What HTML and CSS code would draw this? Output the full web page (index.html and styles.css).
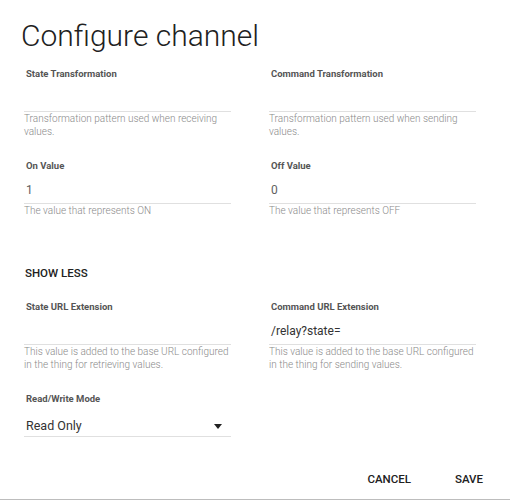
FILE: index.html
```html
<!DOCTYPE html>
<html>
<head>
<meta charset="utf-8">
<link rel="stylesheet" href="styles.css">
</head>
<body>
<div class="dialog">
  <h1 class="title">Configure channel</h1>
  <div class="grid">
    <div class="field">
      <div class="label">State Transformation</div>
      <div class="input"></div>
      <div class="helper">Transformation pattern used when receiving values.</div>
    </div>
    <div class="field">
      <div class="label">Command Transformation</div>
      <div class="input"></div>
      <div class="helper">Transformation pattern used when sending values.</div>
    </div>
    <div class="field">
      <div class="label">On Value</div>
      <div class="input">1</div>
      <div class="helper">The value that represents ON</div>
    </div>
    <div class="field">
      <div class="label">Off Value</div>
      <div class="input">0</div>
      <div class="helper">The value that represents OFF</div>
    </div>
  </div>
  <div class="toggle">SHOW LESS</div>
  <div class="grid">
    <div class="field">
      <div class="label">State URL Extension</div>
      <div class="input"></div>
      <div class="helper">This value is added to the base URL configured in the thing for retrieving values.</div>
    </div>
    <div class="field">
      <div class="label">Command URL Extension</div>
      <div class="input dark">/relay?state=</div>
      <div class="helper">This value is added to the base URL configured in the thing for sending values.</div>
    </div>
    <div class="field">
      <div class="label">Read/Write Mode</div>
      <div class="input select">Read Only<span class="arrow"></span></div>
    </div>
  </div>
  <div class="actions">
    <span class="btn">CANCEL</span>
    <span class="btn">SAVE</span>
  </div>
</div>
</body>
</html>
```
FILE: styles.css
```css
* { box-sizing: border-box; }
html, body { margin: 0; padding: 0; background: #fff; }
body { font-family: Roboto, "Noto Sans", sans-serif; color: #212121; }
.dialog {
  width: 510px;
  height: 500px;
  padding: 16px 0 0 24px;
  border-bottom: 1px solid #bdbdbd;
}
.title {
  margin: 0 0 0 -3px;
  font-size: 30px;
  font-weight: 300;
  line-height: 40px;
  color: #212121;
}
.grid {
  display: grid;
  grid-template-columns: 207px 207px;
  column-gap: 38px;
  row-gap: 21px;
}
.grid:first-of-type { margin-top: 11px; }
.field { display: flex; flex-direction: column; }
.label {
  font-size: 9.5px;
  font-weight: 700;
  line-height: 14px;
  color: #555;
  padding-left: 2px;
}
.input {
  height: 31px;
  padding: 10px 0 0 2px;
  font-size: 12px;
  line-height: 14px;
  color: #616161;
  border-bottom: 1px solid #e0e0e0;
}
.input.dark { color: #333; }
.select {
  position: relative;
  font-size: 12.5px;
  padding-top: 13px;
  color: #333;
}
.arrow {
  position: absolute;
  right: 9px;
  top: 18px;
  width: 0;
  height: 0;
  border-left: 4px solid transparent;
  border-right: 4px solid transparent;
  border-top: 5px solid #212121;
}
.helper {
  font-size: 10px;
  font-weight: 300;
  line-height: 13px;
  color: #8a8a8a;
}
.toggle {
  margin: 49px 0 20px 1px;
  font-size: 11.5px;
  font-weight: 500;
  line-height: 14px;
  color: #212121;
}
.actions {
  display: flex;
  justify-content: flex-end;
  gap: 44px;
  margin-top: 35px;
  padding-right: 27px;
}
.btn {
  font-size: 11.5px;
  font-weight: 500;
  line-height: 14px;
  color: #212121;
}
```
